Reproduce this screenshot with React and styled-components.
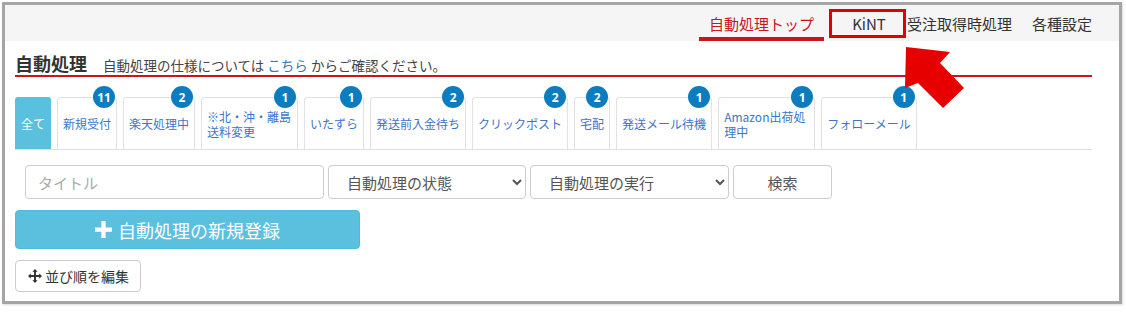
import React from 'react';
import styled, { createGlobalStyle } from 'styled-components';

const GlobalStyle = createGlobalStyle`
  body {
    margin: 0;
    background: #fff;
    font-family: "Noto Sans CJK JP", "Noto Sans", sans-serif;
    color: #333;
  }
`;

const tabs = [
  { label: '全て', active: true },
  { label: '新規受付', count: 11 },
  { label: '楽天処理中', count: 2 },
  { label: '※北・沖・離島送料変更', count: 1 },
  { label: 'いたずら', count: 1 },
  { label: '発送前入金待ち', count: 2 },
  { label: 'クリックポスト', count: 2 },
  { label: '宅配', count: 2 },
  { label: '発送メール待機', count: 1 },
  { label: 'Amazon出荷処理中', count: 1 },
  { label: 'フォローメール', count: 1 },
];

const App = () => {
  return (
    <Page>
      <GlobalStyle />
      <Frame>
        <Header>
          <NavItem $active>自動処理トップ</NavItem>
          <MarkedItem>KiNT</MarkedItem>
          <NavItem $tight>受注取得時処理</NavItem>
          <NavItem $last>各種設定</NavItem>
        </Header>

        <Content>
          <TitleRow>
            <Title>自動処理</Title>
            <Lead>
              自動処理の仕様については <a href="#">こちら</a> からご確認ください。
            </Lead>
          </TitleRow>

          <TabRow>
            {tabs.map((t) => (
              <Tab key={t.label} $active={t.active}>
                {t.label}
                {t.count && <Badge>{t.count}</Badge>}
              </Tab>
            ))}
          </TabRow>

          <SearchRow>
            <TitleInput placeholder="タイトル" />
            <Select $w={198} defaultValue="">
              <option value="">自動処理の状態</option>
            </Select>
            <Select $w={199} defaultValue="">
              <option value="">自動処理の実行</option>
            </Select>
            <SearchButton>検索</SearchButton>
          </SearchRow>

          <PrimaryButton>
            <svg width="17" height="17" viewBox="0 0 16 16">
              <path d="M6 0h4v6h6v4h-6v6H6v-6H0V6h6z" fill="#fff" />
            </svg>
            自動処理の新規登録
          </PrimaryButton>

          <OrderButton>
            <svg width="14" height="14" viewBox="0 0 16 16">
              <path
                d="M8 0l3 3.2H9.1v3.7h3.7V5l3.2 3-3.2 3V9.1H9.1v3.7H11L8 16l-3-3.2h1.9V9.1H3.2V11L0 8l3.2-3v1.9h3.7V3.2H5z"
                fill="#333"
              />
            </svg>
            並び順を編集
          </OrderButton>
        </Content>
      </Frame>

      <Arrow width="70" height="72" viewBox="0 0 70 72">
        <polygon points="6,5 50,10 40,21 64,46 43,66 18,41 5,46" fill="#e60000" />
      </Arrow>
    </Page>
  );
};

const Page = styled.div`
  position: relative;
  width: 1126px;
  height: 316px;
`;

const Frame = styled.div`
  margin: 2px 0 0 2px;
  width: 1120px;
  height: 302px;
  box-sizing: border-box;
  border: 3px solid #a5a5a5;
  box-shadow: 1px 1px 2px rgba(0, 0, 0, 0.15);
`;

const Header = styled.div`
  display: flex;
  justify-content: flex-end;
  align-items: stretch;
  height: 36px;
  background: #f5f5f5;
  padding-right: 27px;
`;

const NavItem = styled.div`
  display: flex;
  align-items: center;
  padding: ${(p) => (p.$tight ? '0 20px 0 1px' : p.$last ? '0' : '0 10px')};
  margin-right: ${(p) => (p.$active ? '5px' : '0')};
  font-size: 15px;
  color: ${(p) => (p.$active ? '#c8161d' : '#333')};
  border-bottom: 4px solid ${(p) => (p.$active ? '#c8161d' : 'transparent')};
  border-top: 4px solid transparent;
`;

const MarkedItem = styled.div`
  display: flex;
  align-items: center;
  justify-content: center;
  width: 77px;
  height: 29px;
  box-sizing: border-box;
  margin-top: 4px;
  padding-left: 3px;
  border: 3px solid #e00000;
  font-size: 15px;
  color: #333;
`;

const Content = styled.div`
  padding: 0 27px 0 10px;
`;

const TitleRow = styled.div`
  display: flex;
  align-items: baseline;
  gap: 16px;
  height: 36px;
  box-sizing: border-box;
  padding-top: 10px;
  border-bottom: 2px solid #c8161d;
`;

const Title = styled.h2`
  margin: 0;
  font-size: 18px;
  line-height: 24px;
  font-weight: bold;
  color: #333;
`;

const Lead = styled.span`
  font-size: 13.5px;
  color: #444;
  a {
    color: #337ab7;
    text-decoration: none;
  }
`;

const TabRow = styled.div`
  display: flex;
  margin-top: 20px;
  border-bottom: 1px solid #e0e0e0;
`;

const Tab = styled.div`
  position: relative;
  display: flex;
  align-items: center;
  height: 52px;
  max-width: 97px;
  box-sizing: border-box;
  padding: 0 5px;
  margin-right: 6px;
  border: 1px solid ${(p) => (p.$active ? '#5bc0de' : '#e2e2e2')};
  border-bottom: none;
  border-radius: 3px 3px 0 0;
  background: ${(p) => (p.$active ? '#5bc0de' : '#fff')};
  color: ${(p) => (p.$active ? '#fff' : '#3b74cc')};
  font-size: 12px;
  line-height: 15px;
`;

const Badge = styled.span`
  position: absolute;
  top: -12px;
  right: 1px;
  width: 22px;
  height: 22px;
  border-radius: 50%;
  background: #0c7cc1;
  color: #fff;
  font-family: "Noto Sans", sans-serif;
  font-size: 12px;
  font-weight: bold;
  display: flex;
  align-items: center;
  justify-content: center;
`;

const SearchRow = styled.div`
  display: flex;
  gap: 4px;
  margin-top: 15px;
  padding-left: 10px;
`;

const TitleInput = styled.input`
  width: 299px;
  height: 34px;
  box-sizing: border-box;
  padding: 0 12px;
  border: 1px solid #ccc;
  border-radius: 4px;
  font-family: inherit;
  font-size: 15px;
  color: #555;
  &::placeholder {
    color: #aaa;
  }
`;

const Select = styled.select`
  width: ${(p) => p.$w}px;
  height: 34px;
  box-sizing: border-box;
  padding: 0 8px 0 14px;
  border: 1px solid #ccc;
  border-radius: 4px;
  background: #fff;
  font-family: inherit;
  font-size: 15px;
  color: #555;
`;

const SearchButton = styled.button`
  width: 99px;
  height: 34px;
  border: 1px solid #ccc;
  border-radius: 4px;
  background: #fff;
  font-family: inherit;
  font-size: 15px;
  color: #555;
`;

const PrimaryButton = styled.button`
  display: flex;
  align-items: center;
  justify-content: center;
  gap: 6px;
  margin-top: 11px;
  width: 345px;
  height: 39px;
  border: 1px solid #4fbad9;
  border-radius: 4px;
  background: #5bc0de;
  color: #fff;
  font-family: inherit;
  font-size: 18px;
`;

const OrderButton = styled.button`
  display: flex;
  align-items: center;
  gap: 3px;
  margin-top: 11px;
  width: 126px;
  height: 32px;
  box-sizing: border-box;
  padding: 0 0 0 12px;
  border: 1px solid #ccc;
  border-radius: 4px;
  background: #fff;
  color: #333;
  font-family: inherit;
  font-size: 14px;
  white-space: nowrap;
`;

const Arrow = styled.svg`
  position: absolute;
  left: 900px;
  top: 40px;
  pointer-events: none;
`;

export default App;
